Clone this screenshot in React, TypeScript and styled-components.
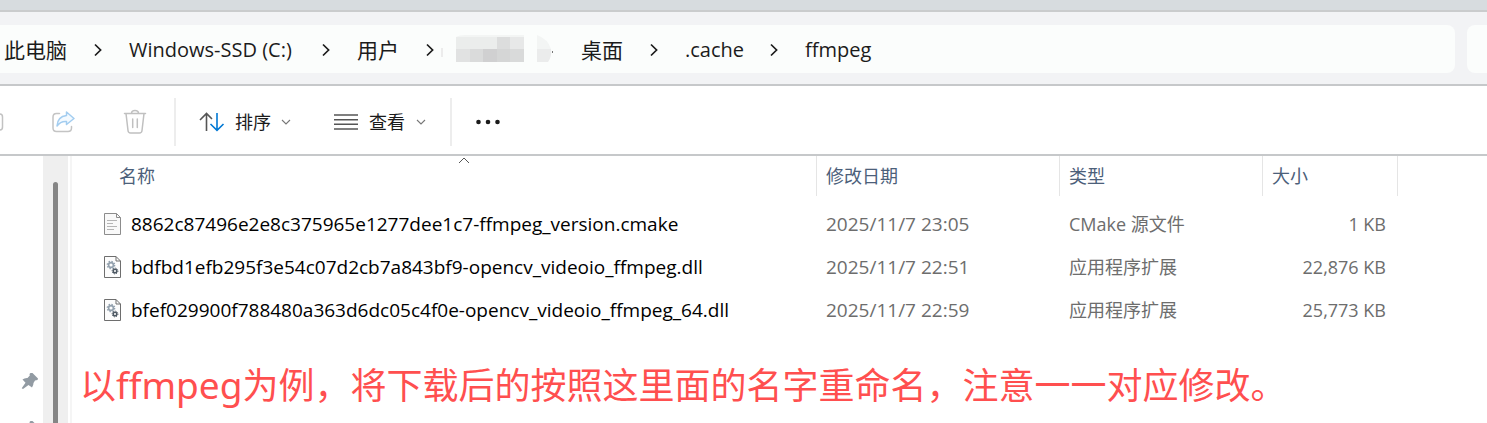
import React from "react";
import styled, { createGlobalStyle } from "styled-components";

const Global = createGlobalStyle`
  * { box-sizing: border-box; }
  body {
    margin: 0;
    background: #fff;
    overflow: hidden;
    font-family: "Open Sans", "Noto Sans CJK SC", sans-serif;
    color: #1b1b1b;
  }
  button { font-family: inherit; }
`;

const Titlebar = styled.div`
  height: 12px;
  background: #d7dcdf;
  border-bottom: 2px solid #cacccd;
`;

const AddressRow = styled.div`
  display: flex;
  gap: 12px;
  padding: 13px 0 11px;
  background: #f2f3f5;
  border-bottom: 2px solid #c6c8ca;
`;

const AddressBar = styled.nav`
  flex: 1;
  height: 48px;
  display: flex;
  align-items: center;
  padding: 2px 0 0 4px;
  background: #fbfdfc;
  border-radius: 0 8px 8px 0;
`;

const SearchBox = styled.div`
  width: 20px;
  height: 48px;
  background: #fbfdfc;
  border-radius: 8px 0 0 8px;
`;

const Crumb = styled.a<{ $w: number }>`
  width: ${(p) => p.$w}px;
  flex: none;
  white-space: nowrap;
  color: #1b1b1b;
  text-decoration: none;
  font-size: 20px;
  line-height: 28px;
`;

const CjkCrumb = styled(Crumb)`
  font-size: 21px;
`;

const CrumbArrow = styled.span<{ $after?: number }>`
  display: flex;
  flex: none;
  padding-left: 27px;
  padding-right: ${(p) => p.$after ?? 27}px;
`;

const Commands = styled.div`
  height: 70px;
  display: flex;
  align-items: center;
  padding-top: 4px;
  border-bottom: 2px solid #c6c8ca;
`;

const Command = styled.button<{ $w: number; $pad?: number; $gap?: number }>`
  width: ${(p) => p.$w}px;
  height: 48px;
  flex: none;
  display: flex;
  align-items: center;
  gap: ${(p) => p.$gap ?? 0}px;
  padding: 0 0 0 ${(p) => p.$pad ?? 0}px;
  border: 0;
  background: none;
  color: #1b1b1b;
  font-size: 18px;
  line-height: 24px;
  white-space: nowrap;
`;

const Separator = styled.div`
  width: 2px;
  height: 48px;
  flex: none;
  background: #ededed;
`;

const Body = styled.div`
  display: flex;
  align-items: stretch;
`;

const Sidebar = styled.aside`
  width: 43px;
  flex: none;
  display: flex;
  flex-direction: column;
  height: 267px;
  overflow: hidden;
`;

const SidebarRule = styled.hr`
  width: 31px;
  height: 2px;
  margin: 176px 0 40px;
  border: 0;
  background: #d5d5d5;
`;

const PinSlot = styled.div`
  height: 48px;
  padding-left: 21px;
  flex: none;
`;

const ScrollTrack = styled.div`
  width: 25px;
  flex: none;
  padding: 26px 10px 0;
  background: #efefef;
`;

const ScrollThumb = styled.div`
  height: 100%;
  border-radius: 3px 3px 0 0;
  background: #858585;
`;

const Content = styled.main`
  flex: 1;
  min-width: 0;
  margin-left: 2px;
  padding-left: 28px;
  border-left: 2px solid #f5f5f5;
`;

const Files = styled.table`
  width: 1298px;
  border-collapse: separate;
  border-spacing: 0;
  table-layout: fixed;
`;

const Col = styled.col<{ $w: number }>`
  width: ${(p) => p.$w}px;
`;

const Th = styled.th<{ $pad: number }>`
  position: relative;
  height: 40px;
  padding: 0 0 0 ${(p) => p.$pad}px;
  border-right: 1px solid #e5e5e5;
  text-align: left;
  font-weight: 400;
  font-size: 18px;
  line-height: 24px;
  color: #4c607a;
`;

const SortMark = styled.svg`
  position: absolute;
  top: 1px;
  left: 50%;
`;

const Td = styled.td<{ $right?: boolean }>`
  height: 43px;
  padding: 0 ${(p) => (p.$right ? 12 : 0)}px 0 9px;
  text-align: ${(p) => (p.$right ? "right" : "left")};
  font-size: 18px;
  line-height: 24px;
  color: #6d6d6d;
  white-space: nowrap;
`;

const DateCell = styled(Td)`
  font-size: 19px;
`;

const NameCell = styled(Td)`
  padding: 0 0 0 4px;
  font-size: 19px;
  color: #000;
`;

const FileName = styled.div`
  display: flex;
  align-items: center;
  gap: 9px;
`;

const Spacer = styled.tbody`
  td { height: 6px; padding: 0; }
`;

const Note = styled.p`
  margin: 30px 0 0 -20px;
  font-size: 36px;
  line-height: 48px;
  color: #ff4f4f;
  white-space: nowrap;
`;

const NoteLatin = styled.span`
  font-family: "Noto Sans", sans-serif;
  font-size: 37px;
`;

const Chevron = () => (
  <svg width="8" height="14" viewBox="0 0 8 14" fill="none" stroke="#1b1b1b" strokeWidth="1.7">
    <path d="M1 1.5 L6.6 7 L1 12.5" />
  </svg>
);

const Caret = () => (
  <svg width="10" height="6" viewBox="0 0 10 6" fill="none" stroke="#777" strokeWidth="1.1">
    <path d="M1 1 L5 5 L9 1" />
  </svg>
);

const RedactedArt = styled.svg`
  flex: none;
  margin-right: 28px;
`;

const Redacted = () => (
  <RedactedArt width="112" height="32" viewBox="0 0 112 32" aria-hidden="true">
    <rect x="0" y="14" width="2" height="9" fill="#ececec" />
    <path d="M15 3 Q18 1 24 1 H83 V15 H15 Z" fill="#f3f5f4" />
    <rect x="15" y="3" width="41" height="12" fill="#ebedec" />
    <rect x="56" y="3" width="13" height="12" fill="#dcdddd" />
    <rect x="69" y="3" width="14" height="12" fill="#e7e8e8" />
    <rect x="15" y="15" width="14" height="13" fill="#e1e2e2" />
    <rect x="29" y="15" width="13" height="13" fill="#dadbdb" />
    <rect x="42" y="15" width="14" height="13" fill="#d0d0d1" />
    <rect x="56" y="15" width="13" height="13" fill="#d5d6d6" />
    <rect x="69" y="15" width="14" height="13" fill="#d9dada" />
    <path d="M96 1 Q107 5 110 15 H96 Z" fill="#f3f5f4" />
    <path d="M96 15 H110 Q111 23 107 28 H96 Z" fill="#ebecec" />
    <rect x="111" y="17" width="1" height="2" fill="#777" />
  </RedactedArt>
);

const ClippedIcon = () => (
  <svg width="4" height="18" viewBox="0 0 4 18" fill="none" stroke="#c2c2c2" strokeWidth="1.5">
    <path d="M-4 1 H0 Q2.5 1 2.5 4 V14 Q2.5 17 0 17 H-4" />
  </svg>
);

const ShareIcon = () => (
  <svg width="24" height="24" viewBox="0 0 24 24" fill="none" strokeWidth="1.5" strokeLinejoin="round">
    <path d="M8.5 3.5 H5.5 Q2 3.5 2 7 V18 Q2 21.5 5.500 21.500 H17 Q20.500 21.500 20.500 18 V16.500" stroke="#c4c4c4" strokeLinecap="round" />
    <path d="M15.500 2 L23 8.500 L15.500 14.500 V11.500 Q9.500 11 6 16 Q6.500 6.500 15.500 5.500 Z" stroke="#a3cdf0" fill="#f4faff" />
  </svg>
);

const TrashIcon = () => (
  <svg width="24" height="26" viewBox="0 0 24 26" fill="none" stroke="#c0c0c0" strokeWidth="1.5" strokeLinecap="round">
    <path d="M1.500 4.500 H22.500 M8.500 4.500 Q8.500 1.500 12 1.500 Q15.500 1.500 15.500 4.500 M3 4.500 L5 21.500 Q5.300 24 7.500 24 H16.500 Q18.700 24 19 21.500 L21 4.500 M9.700 10 V18.500 M14.300 10 V18.500" />
  </svg>
);

const SortIcon = () => (
  <svg width="26" height="20" viewBox="0 0 26 20" fill="none" strokeWidth="1.6">
    <path d="M7.500 19 V1.500 M1 8 L7.500 1.500 L13 7" stroke="#555" />
    <path d="M18 1 V18.300 M11.500 12 L18 18.300 L24.500 12" stroke="#0078d4" />
  </svg>
);

const ViewIcon = () => (
  <svg width="24" height="16" viewBox="0 0 24 16" fill="none" stroke="#555" strokeWidth="1.500">
    <path d="M0 1 H24 M0 5.700 H24 M0 10.300 H24 M0 15 H24" />
  </svg>
);

const MoreIcon = () => (
  <svg width="24" height="6" viewBox="0 0 24 6" fill="#1b1b1b">
    <circle cx="2.500" cy="3" r="2.300" />
    <circle cx="12" cy="3" r="2.300" />
    <circle cx="21.500" cy="3" r="2.300" />
  </svg>
);

const PinIcon = () => (
  <svg width="18" height="18" viewBox="0 0 18 18" fill="#929ba3">
    <path d="M9.500 1 L11.500 1 L17 6.500 L16.500 8 L14 8.500 L12.500 11 Q12.500 13.500 11 15.500 L7.500 13 L2 17 L0.700 16.200 L4.500 10.700 L1.500 7.500 Q3.500 5.800 6.500 6 L8.800 3.500 L8.500 2 Z" />
  </svg>
);

const TextFileIcon = () => (
  <svg width="18" height="22" viewBox="0 0 18 22" fill="none">
    <path d="M0.500 0.500 H12.500 L16.500 4.500 V21.500 H0.500 Z" fill="#f9f9f9" stroke="#8c8c8c" />
    <path d="M12.500 0.500 V4.500 H16.500" stroke="#8c8c8c" />
    <path d="M3 7.500 H13 M3 10.500 H9 M3 13.500 H13 M3 16.500 H10" stroke="#b5b5b5" />
  </svg>
);

const DllIcon = () => (
  <svg width="18" height="22" viewBox="0 0 18 22" fill="none">
    <path d="M0.500 0.500 H12 L16.500 5 V21.500 H0.500 Z" fill="#fcfcfc" stroke="#6e6e6e" />
    <path d="M12 0.500 V5 H16.500" stroke="#6e6e6e" />
    <circle cx="7" cy="9" r="2.400" stroke="#93a1ae" strokeWidth="1.600" />
    <circle cx="7" cy="9" r="3.700" stroke="#93a1ae" strokeWidth="1.300" strokeDasharray="1.450 1.450" />
    <circle cx="11" cy="15" r="1.800" stroke="#4d5863" strokeWidth="1.500" />
    <circle cx="11" cy="15" r="2.900" stroke="#4d5863" strokeWidth="1" strokeDasharray="1.140 1.140" />
  </svg>
);

const files = [
  { name: "8862c87496e2e8c375965e1277dee1c7-ffmpeg_version.cmake", date: "2025/11/7 23:05", type: "CMake 源文件", size: "1 KB", dll: false },
  { name: "bdfbd1efb295f3e54c07d2cb7a843bf9-opencv_videoio_ffmpeg.dll", date: "2025/11/7 22:51", type: "应用程序扩展", size: "22,876 KB", dll: true },
  { name: "bfef029900f788480a363d6dc05c4f0e-opencv_videoio_ffmpeg_64.dll", date: "2025/11/7 22:59", type: "应用程序扩展", size: "25,773 KB", dll: true },
];

export default function App() {
  return (
    <>
      <Global />
      <Titlebar />
      <AddressRow>
        <AddressBar aria-label="地址">
          <CjkCrumb href="#" $w={63}>此电脑</CjkCrumb>
          <CrumbArrow><Chevron /></CrumbArrow>
          <Crumb href="#" $w={166}>Windows-SSD (C:)</Crumb>
          <CrumbArrow><Chevron /></CrumbArrow>
          <CjkCrumb href="#" $w={42}>用户</CjkCrumb>
          <CrumbArrow $after={7}><Chevron /></CrumbArrow>
          <Redacted />
          <CjkCrumb href="#" $w={42}>桌面</CjkCrumb>
          <CrumbArrow><Chevron /></CrumbArrow>
          <Crumb href="#" $w={58}>.cache</Crumb>
          <CrumbArrow><Chevron /></CrumbArrow>
          <Crumb href="#" $w={68}>ffmpeg</Crumb>
        </AddressBar>
        <SearchBox />
      </AddressRow>
      <Commands>
        <Command $w={51} aria-label="重命名"><ClippedIcon /></Command>
        <Command $w={72} aria-label="共享"><ShareIcon /></Command>
        <Command $w={51} aria-label="删除"><TrashIcon /></Command>
        <Separator />
        <Command $w={134} $pad={23} $gap={10}><SortIcon />排序<Caret /></Command>
        <Command $w={140} $pad={24} $gap={11}><ViewIcon />查看<Caret /></Command>
        <Separator />
        <Command $w={72} $pad={24} aria-label="更多"><MoreIcon /></Command>
      </Commands>
      <Body>
        <Sidebar>
          <SidebarRule />
          <PinSlot><PinIcon /></PinSlot>
          <PinSlot><PinIcon /></PinSlot>
        </Sidebar>
        <ScrollTrack><ScrollThumb /></ScrollTrack>
        <Content>
          <Files>
            <colgroup>
              <Col $w={717} />
              <Col $w={243} />
              <Col $w={203} />
              <Col $w={135} />
            </colgroup>
            <thead>
              <tr>
                <Th $pad={19}>
                  名称
                  <SortMark width="12" height="7" viewBox="0 0 12 7" fill="none" stroke="#555">
                    <path d="M1 6 L6 1 L11 6" />
                  </SortMark>
                </Th>
                <Th $pad={9}>修改日期</Th>
                <Th $pad={9}>类型</Th>
                <Th $pad={9}>大小</Th>
              </tr>
            </thead>
            <Spacer><tr><td colSpan={4} /></tr></Spacer>
            <tbody>
              {files.map((f) => (
                <tr key={f.name}>
                  <NameCell>
                    <FileName>{f.dll ? <DllIcon /> : <TextFileIcon />}{f.name}</FileName>
                  </NameCell>
                  <DateCell>{f.date}</DateCell>
                  <Td>{f.type}</Td>
                  <Td $right>{f.size}</Td>
                </tr>
              ))}
            </tbody>
          </Files>
          <Note>以<NoteLatin>ffmpeg</NoteLatin>为例，将下载后的按照这里面的名字重命名，注意一一对应修改。</Note>
        </Content>
      </Body>
    </>
  );
}
